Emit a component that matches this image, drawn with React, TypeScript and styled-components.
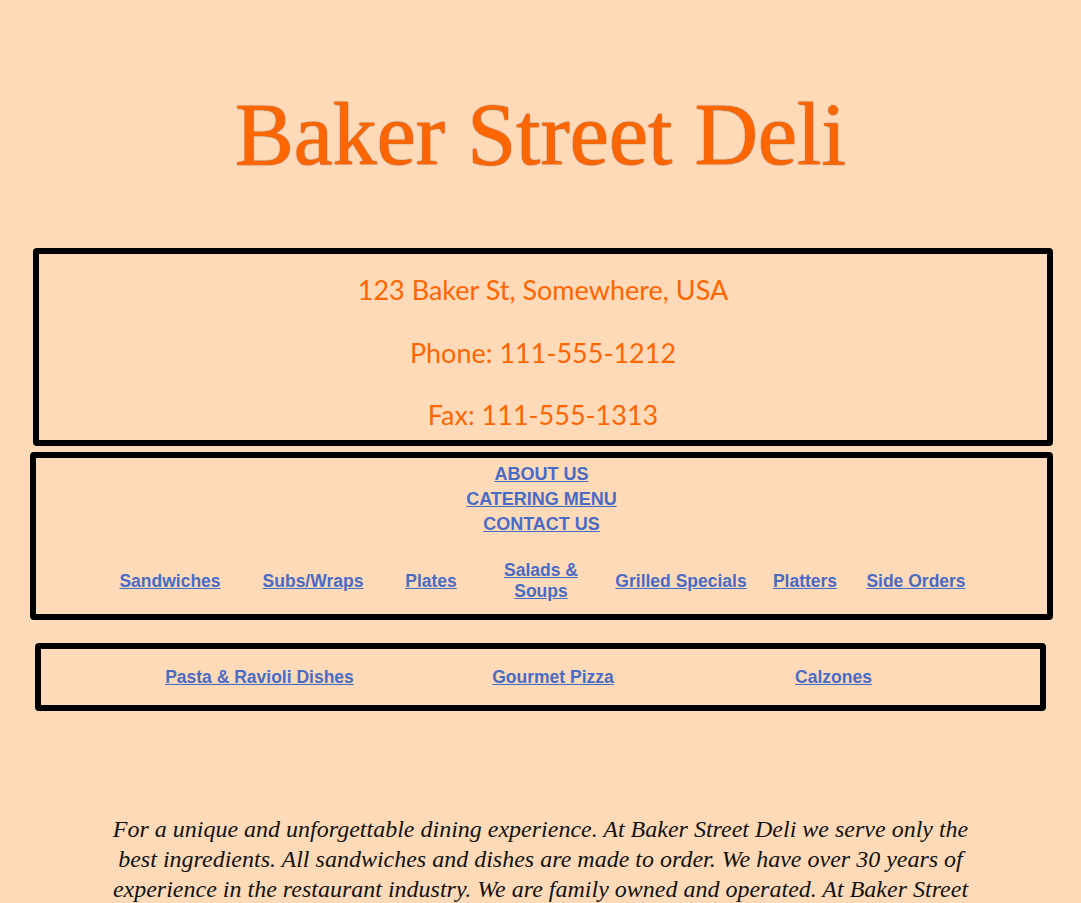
import React from "react";
import styled, { createGlobalStyle } from "styled-components";

const Global = createGlobalStyle`
  html, body { margin: 0; padding: 0; background: #ffdab9; }
  body { font-family: "Liberation Serif", serif; }
`;

const Page = styled.div`
  background: #ffdab9;
  min-height: 903px;
  overflow: hidden;
`;

const Title = styled.h1`
  margin: 91px 0 0;
  font-family: "Liberation Serif", "Times New Roman", serif;
  font-weight: normal;
  font-size: 88px;
  line-height: 88px;
  color: #ff6600;
  text-align: center;
  -webkit-text-stroke: 0.4px #ff6600;
  text-shadow: 0 0 1.5px #3a2a20;
`;

const Box = styled.section<{ $left: number; $width: number; $top: number }>`
  box-sizing: border-box;
  margin: ${(p) => p.$top}px 0 0 ${(p) => p.$left}px;
  width: ${(p) => p.$width}px;
  border: 6px solid #000;
  border-radius: 4px;
`;

const InfoBox = styled(Box)`
  padding: 18px 0 7px;
`;

const InfoLine = styled.p`
  margin: 0 0 26.5px;
  font-family: Lato, "Noto Sans", sans-serif;
  font-size: 27px;
  line-height: 36px;
  color: #ff6600;
  text-align: center;
  &:last-child { margin-bottom: 0; }
`;

const NavBox = styled(Box)`
  padding: 4px 0 12px;
`;

const TopLinks = styled.nav`
  display: flex;
  flex-direction: column;
  align-items: center;
`;

const Link = styled.a`
  font-family: "Liberation Sans", Arial, sans-serif;
  font-weight: bold;
  color: #4a6bc4;
  text-decoration: underline;
  cursor: pointer;
`;

const TopLink = styled(Link)`
  font-size: 18px;
  line-height: 25px;
`;

const MenuGrid = styled.div<{ $cols: string; $offset: number }>`
  display: grid;
  grid-template-columns: ${(p) => p.$cols};
  align-items: center;
  margin-left: ${(p) => p.$offset}px;
`;

const MenuCell = styled.div`
  text-align: center;
  font-size: 17.5px;
  line-height: 21px;
`;

const MenuLink = styled(Link)`
  font-size: 17.5px;
  line-height: 21px;
`;

const MenuRow = styled(MenuGrid)`
  margin-top: 23px;
`;

const DishBox = styled(Box)`
  padding: 18px 0 17px;
`;

const Intro = styled.p`
  margin: 103px auto 0;
  width: 890px;
  font-family: "Liberation Serif", "Times New Roman", serif;
  font-style: italic;
  font-size: 24px;
  line-height: 30px;
  color: #111;
  text-align: center;
`;

const menu = [
  "Sandwiches",
  "Subs/Wraps",
  "Plates",
  "Salads & Soups",
  "Grilled Specials",
  "Platters",
  "Side Orders",
];

const dishes = ["Pasta & Ravioli Dishes", "Gourmet Pizza", "Calzones"];

export default function App() {
  return (
    <Page>
      <Global />
      <Title>Baker Street Deli</Title>
      <InfoBox $left={33} $width={1020} $top={69}>
        <InfoLine>123 Baker St, Somewhere, USA</InfoLine>
        <InfoLine>Phone: 111-555-1212</InfoLine>
        <InfoLine>Fax: 111-555-1313</InfoLine>
      </InfoBox>
      <NavBox $left={30} $width={1023} $top={6}>
        <TopLinks>
          <TopLink>ABOUT US</TopLink>
          <TopLink>CATERING MENU</TopLink>
          <TopLink>CONTACT US</TopLink>
        </TopLinks>
        <MenuRow $cols="142px 144px 92px 128px 152px 96px 126px" $offset={63}>
          {menu.map((m) => (
            <MenuCell key={m}>
              <MenuLink>{m}</MenuLink>
            </MenuCell>
          ))}
        </MenuRow>
      </NavBox>
      <DishBox $left={35} $width={1011} $top={23}>
        <MenuGrid $cols="327px 260px 301px" $offset={55}>
          {dishes.map((d) => (
            <MenuCell key={d}>
              <MenuLink>{d}</MenuLink>
            </MenuCell>
          ))}
        </MenuGrid>
      </DishBox>
      <Intro>
        For a unique and unforgettable dining experience. At Baker Street Deli we serve only the
        best ingredients. All sandwiches and dishes are made to order. We have over 30 years of
        experience in the restaurant industry. We are family owned and operated. At Baker Street
        Deli our goal is to make every customer feel at home.
      </Intro>
    </Page>
  );
}
